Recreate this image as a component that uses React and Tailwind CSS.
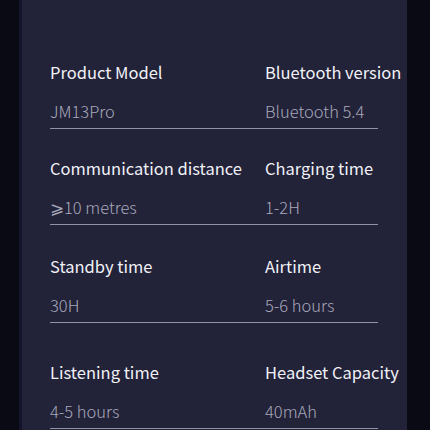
import React from 'react';

const rows = [
    { pt: 'pt-[60px]', items: [['Product Model', 'JM13Pro'], ['Bluetooth version', 'Bluetooth 5.4']] },
    { pt: 'pt-[27px]', items: [['Communication distance', '⩾10 metres'], ['Charging time', '1-2H']] },
    { pt: 'pt-[29px]', items: [['Standby time', '30H'], ['Airtime', '5-6 hours']] },
    { pt: 'pt-[37px]', items: [['Listening time', '4-5 hours'], ['Headset Capacity', '40mAh']] },
];

const SpecRow = ({ row }) => (
    <div className={row.pt}>
        <div className="grid grid-cols-[215px_1fr]">
            {row.items.map(([title, value]) => (
                <div key={title} className="flex flex-col">
                    <span className="text-[16.5px] leading-[24px] text-[#f1f1f6] whitespace-nowrap">{title}</span>
                    <span className="mt-[15px] text-[16.5px] leading-[24px] font-light text-[#a8a8ba] whitespace-nowrap">{value}</span>
                </div>
            ))}
        </div>
        <div className="mt-[5px] mr-[29px] h-px bg-[#9191a9]" />
    </div>
);

const App = () => {
    return (
        <div
            className="w-[430px] h-[430px] overflow-hidden flex bg-[#0a0a14]"
            style={{ fontFamily: '"Noto Sans CJK SC", "Noto Sans", sans-serif' }}
        >
            <div className="w-[19px] bg-[#0a0a14]" />
            <div className="w-[3px] bg-[#14142a]" />
            <div className="w-[385px] bg-[#222239] pl-[28px]">
                {rows.map((row, i) => (
                    <SpecRow key={i} row={row} />
                ))}
            </div>
            <div className="flex-1 bg-[#0a0a14]" />
        </div>
    );
};

export default App;
